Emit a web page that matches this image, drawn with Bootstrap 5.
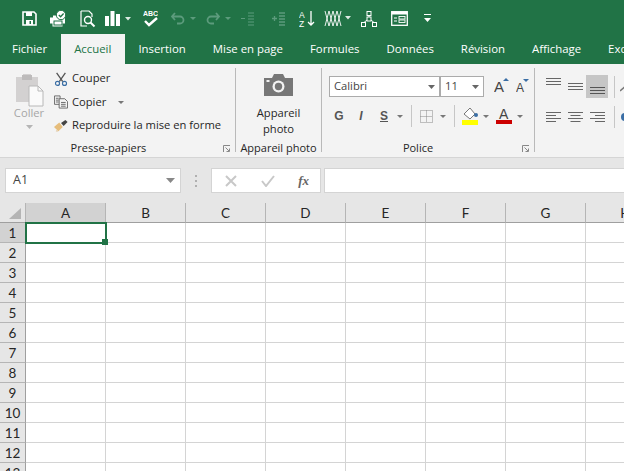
<!DOCTYPE html>
<html lang="fr">
<head>
<meta charset="utf-8">
<title>Excel</title>
<link href="https://cdn.jsdelivr.net/npm/bootstrap@5.3.0/dist/css/bootstrap.min.css" rel="stylesheet">
<style>
html,body{height:471px;overflow:hidden;background:#fff}
body{font-family:"Open Sans","Noto Sans",sans-serif;font-size:11.2px;color:#262626}
.qat{height:34px;background:#217346;display:grid;align-items:center;justify-items:center;padding-left:15px;padding-top:3px;
 grid-template-columns:28px 30px 30px 18px 14px 30px 36px 35px 22px 40px 18px 43px 20px 40px 16px}
.tabbar{height:30px;background:#217346;flex-wrap:nowrap;overflow:hidden;padding-left:0}
.tabitem{color:#fff;font-size:11.4px;padding:6px 13.5px 0;height:30px;white-space:nowrap;line-height:17px}
.tabitem:hover{color:#fff}
.tabfirst{padding-left:12px}
.tabon,.tabon:hover{background:#f3f3f3;color:#217346;padding:6px 13.5px 0;margin-left:0}
.ribbon{height:93px;background:#f3f3f3;border-bottom:1px solid #d5d5d5;box-sizing:content-box;overflow:hidden}
.grp{position:relative;height:84px;margin-top:4px;border-right:1px solid #b9b9b9;flex:none}
.g1{width:236px}.g2{width:86px}.g3{width:213px}.g4{width:89px;border-right:0}
.grplabel{position:absolute;left:0;right:0;bottom:-4px;text-align:center;font-size:11px;line-height:16px;color:#262626}
.lbl1{padding-right:18px}.lbl3{padding-right:20px}
.launch{position:absolute;bottom:-1px;right:4px;line-height:0}
.paste{width:58px;text-align:center;color:#a6a6a6;padding-top:4px}
.paste svg{display:block;margin:0 auto}
.pastetxt{margin-top:-3px;line-height:16px;font-size:11.2px}
.cliprow{height:23.5px;display:flex;align-items:center;gap:4px;white-space:nowrap}
.clipcol{margin-left:-4px;margin-top:-1px}
.icn{width:14px;display:flex;justify-content:center;flex:none}
.camwrap{text-align:center;padding-top:6px;line-height:16px}
.camwrap svg{display:block;margin:0 auto 9px}
.combo{height:21px;background:#fff;border:1px solid #ababab;display:flex;align-items:center;justify-content:space-between;padding:0 4px;font-size:11.2px;color:#444}
.cfont{width:111px}.csize{width:44px}
.frow{padding:8px 0 0 7px;align-items:center}
.frow2{display:grid;grid-template-columns:20px 24px 22px 10px 12px 18px 16px 6px 37px 31px;align-items:center;justify-items:center;padding:8px 0 0 7px;height:30px;font-size:12px;color:#555}
.frow2 b{font-family:"Liberation Sans",sans-serif}
.vsep{width:1px;height:22px;background:#c6c6c6;display:block}
.sz{display:grid;grid-template-columns:3px 21px 21px;align-items:center;justify-items:center;margin-left:4px}
.algrid{display:grid;grid-template-columns:22px 22px 22px 6px 1px 20px;grid-template-rows:23px 7px 23px;justify-items:center;align-items:center;padding:7px 0 0 7px}
.alcell{width:22px;height:23px;display:flex;justify-content:center;padding:3px 0}
.selbg{background:#c6c6c6}
.fbar{height:45px;background:#e6e6e6;padding:10px 0 0 5px;display:flex;align-items:flex-start}
.fbox{height:25px;background:#fff;border:1px solid #d4d4d4;display:flex;align-items:center}
.namebox{width:176px;justify-content:space-between;padding:0 5px 0 7px;font-size:12.5px;color:#444}
.fxbox{width:110px;justify-content:space-between;padding:0 11px 0 13px;color:#666}
.fxtxt{font-family:"Liberation Serif",serif;font-style:italic;font-weight:700;font-size:13px}
.finput{flex:1;margin-left:3px;border-right:0}
.dots{width:30px;display:flex;flex-direction:column;align-items:center;justify-content:center;height:25px;gap:3px}
.dots i{width:2px;height:2px;background:#b0b0b0;display:block}
.sheetwrap{height:268px;overflow:hidden;background:#fff}
table.gridt{table-layout:fixed;width:666px;border-collapse:separate;border-spacing:0;font-family:Lato,"Liberation Sans",sans-serif;font-size:13.500px;color:#262626;margin:0}
.gridt th,.gridt td{height:20px;padding:0;border:0;border-right:1px solid #d4d4d4;border-bottom:1px solid #d4d4d4;background:#fff;line-height:18px;text-align:center;font-weight:400;box-shadow:none}
.gridt thead th{background:#e6e6e6;border-right-color:#b5b5b5;border-bottom-color:#9f9f9f}
.gridt tbody th{background:#e6e6e6;border-right-color:#9f9f9f;border-bottom-color:#b5b5b5}
.gridt .hdon{background:#d2d2d2}
.gridt .corner{position:relative;background:#e6e6e6}
.gridt .corner svg{position:absolute;left:9px;top:5px}
.colrh{width:26px}.colc{width:80px}
.gridt .a1{position:relative}
.cellsel{position:absolute;left:-1px;top:-1px;width:82px;height:22px;border:2px solid #217346}
.cellhandle{position:absolute;right:-3px;bottom:-3px;width:6px;height:6px;background:#217346}
</style>
</head>
<body>
<div class="qat">
 <svg width="15" height="15" viewBox="0 0 15 15"><path d="M1 1h11l2 2v11H1z" fill="none" stroke="#fff" stroke-width="1.6"/><rect x="4" y="1" width="6" height="4" fill="#fff"/><rect x="4" y="9" width="7" height="5" fill="#fff"/><rect x="7.5" y="10" width="1.5" height="3" fill="#217346"/></svg>
 <svg width="18" height="17" viewBox="0 0 18 17"><path d="M1 6.500h3v-2h9v2h3v6h-2.500v3h-10v-3H1z" fill="#fff" transform="translate(0 1)"/><circle cx="12" cy="5" r="4.700" fill="#fff" stroke="#217346"/><path d="M9.800 5l1.800 1.800 3-3.300" fill="none" stroke="#217346" stroke-width="1.300"/><rect x="5" y="11" width="8" height="4" fill="none" stroke="#217346"/></svg>
 <svg width="16" height="18" viewBox="0 0 16 18"><path d="M1 1h8l3 3v3M1 1v15h6" fill="none" stroke="#fff" stroke-width="1.200"/><circle cx="8" cy="10" r="3.500" fill="none" stroke="#fff" stroke-width="1.400"/><path d="M10.500 12.500l4 4" stroke="#fff" stroke-width="2"/></svg>
 <svg width="15" height="15" viewBox="0 0 15 15"><rect x="0" y="5" width="4" height="10" fill="#fff"/><rect x="5.500" y="0" width="4" height="15" fill="#fff"/><rect x="11" y="3" width="4" height="12" fill="#fff"/></svg>
 <svg width="6" height="4" viewBox="0 0 6 4"><path d="M0 0h6L3 3.500z" fill="#dcebe3"/></svg>
 <svg width="15" height="19" viewBox="0 0 15 19"><text x="0" y="6.500" font-family="Liberation Sans,sans-serif" font-weight="700" font-size="7" fill="#fff">ABC</text><path d="M2 12l4 4 8-7" fill="none" stroke="#fff" stroke-width="2.400"/></svg>
 <svg width="25" height="13" viewBox="0 0 25 13"><path d="M4 1L1 4.500 4 8M1.500 4.500H9a3.500 3.500 0 0 1 0 7H6" fill="none" stroke="#5c9b7c" stroke-width="1.800"/><path d="M19 5h6l-3 3z" fill="#5c9b7c"/></svg>
 <svg width="25" height="13" viewBox="0 0 25 13"><path d="M10 1l3 3.500L10 8M12.500 4.500H5a3.500 3.500 0 0 0 0 7h3" fill="none" stroke="#5c9b7c" stroke-width="1.800"/><path d="M19 5h6l-3 3z" fill="#5c9b7c"/></svg>
 <svg width="15" height="14" viewBox="0 0 15 14"><path d="M8 1h6M8 4h6M8 7h6M8 10h6M8 13h6M1 6.500h4" stroke="#5c9b7c" stroke-width="1.100" fill="none"/></svg>
 <svg width="15" height="14" viewBox="0 0 15 14"><path d="M8 1h6M8 4h6M8 7h6M8 10h6M8 13h6M1 6.500h5M3.500 4v5" stroke="#5c9b7c" stroke-width="1.300" fill="none"/></svg>
 <svg width="17" height="18" viewBox="0 0 17 18"><text x="0" y="8" font-family="Liberation Sans,sans-serif" font-size="8.500" fill="#fff">A</text><text x="0" y="16.500" font-family="Liberation Sans,sans-serif" font-size="8.500" fill="#fff">Z</text><path d="M12 1v14M9 12l3 3 3-3" fill="none" stroke="#fff" stroke-width="1.300"/></svg>
 <svg width="27" height="17" viewBox="0 0 27 17"><path d="M1 1l4 15 4-15 4 15 4-15M1 16L5 1l4 15 4-15 4 15" fill="none" stroke="#fff" stroke-width=".9"/><path d="M21 6h6l-3 3.500z" fill="#dcebe3"/></svg>
 <svg width="16" height="16" viewBox="0 0 16 16"><g fill="none" stroke="#fff"><rect x="6" y=".5" width="4" height="4"/><rect x=".5" y="11.500" width="4" height="4"/><rect x="11.500" y="11.500" width="4" height="4"/><rect x="6" y="6" width="4" height="4"/><path d="M8 4.500V6M6 9l-3 2.500M10 9l3 2.500"/></g></svg>
 <svg width="17" height="15" viewBox="0 0 17 15"><rect x=".7" y=".7" width="15.600" height="13.600" fill="none" stroke="#fff" stroke-width="1.300"/><rect x="1" y="1" width="15" height="2.500" fill="#fff"/><path d="M3 7h3M3 10h3" stroke="#fff"/><rect x="8" y="5.500" width="6" height="2.500" fill="none" stroke="#fff" stroke-width=".9"/><rect x="8" y="9" width="6" height="2.500" fill="none" stroke="#fff" stroke-width=".9"/></svg>
 <svg width="7" height="9" viewBox="0 0 7 9"><path d="M0 .5h7" stroke="#fff"/><path d="M0 4h7L3.500 8z" fill="#fff"/></svg>
</div>

<ul class="nav tabbar">
 <li><a class="nav-link tabitem tabfirst" href="#">Fichier</a></li>
 <li><a class="nav-link tabitem tabon" href="#">Accueil</a></li>
 <li><a class="nav-link tabitem" href="#">Insertion</a></li>
 <li><a class="nav-link tabitem" href="#">Mise en page</a></li>
 <li><a class="nav-link tabitem" href="#">Formules</a></li>
 <li><a class="nav-link tabitem" href="#">Données</a></li>
 <li><a class="nav-link tabitem" href="#">Révision</a></li>
 <li><a class="nav-link tabitem" href="#">Affichage</a></li>
 <li><a class="nav-link tabitem" href="#">Excel</a></li>
</ul>

<div class="ribbon d-flex">
 <section class="grp g1 d-flex">
  <div class="paste">
   <svg width="29" height="36" viewBox="0 0 29 36"><path d="M1 5h7V2h8v3h7v25H1z" fill="#d3d1d1"/><rect x="7" y="3" width="10" height="5" fill="#bdbbbb"/><path d="M14 14h9l5 5v15H14z" fill="#fafafa" stroke="#b8b8b8"/><path d="M23 14v5h5" fill="none" stroke="#b8b8b8"/></svg>
   <div class="pastetxt">Coller</div>
   <svg class="mt-1" width="7" height="4" viewBox="0 0 7 4"><path d="M0 0h7L3.500 4z" fill="#b5b5b5"/></svg>
  </div>
  <div class="clipcol">
   <div class="cliprow"><span class="icn"><svg width="16" height="16" viewBox="0 0 16 16"><path d="M3 1l7 10M13 1L6 11" stroke="#555" stroke-width="1.500" fill="none"/><circle cx="4" cy="13" r="2.300" fill="none" stroke="#3a6ea5" stroke-width="1.300"/><circle cx="12" cy="13" r="2.300" fill="none" stroke="#3a6ea5" stroke-width="1.300"/></svg></span>Couper</div>
   <div class="cliprow"><span class="icn"><svg width="15" height="14" viewBox="0 0 15 14"><path d="M.5.500h6v9h-6zM2 3h3M2 5h3M2 7h3" fill="none" stroke="#666"/><path d="M5.500 3.500h6l3 3v7h-9z" fill="#f3f3f3" stroke="#666"/><path d="M7.500 7.500h5M7.500 9.500h5M7.500 11.500h5" stroke="#666"/></svg></span>Copier<svg class="ms-2" width="6" height="3" viewBox="0 0 6 3"><path d="M0 0h6L3 3z" fill="#777"/></svg></div>
   <div class="cliprow"><span class="icn"><svg width="16" height="14" viewBox="0 0 16 14"><path d="M0 8l6-5 4 5-5 5z" fill="#e6bd7b"/><path d="M3 12l-1 1 3 0z" fill="#c99a52"/><path d="M8 3.500L13 0l2.500 2.500L11 7z" fill="#444"/></svg></span>Reproduire la mise en forme</div>
  </div>
  <div class="grplabel lbl1">Presse-papiers</div>
  <span class="launch"><svg width="8" height="8" viewBox="0 0 8 8"><path d="M.5 7V.5H7M2.500 2.500L6 6M3.500 6.500h3v-3" fill="none" stroke="#888"/></svg></span>
 </section>

 <section class="grp g2">
  <div class="camwrap">
   <svg width="29" height="22" viewBox="0 0 29 22"><path d="M0 4h8l2-4h9l2 4h8v18H0z" fill="#777"/><circle cx="14.500" cy="12.500" r="6" fill="#f3f3f3"/><circle cx="14.500" cy="12.500" r="3.700" fill="#777"/><rect x="2.500" y="6" width="3" height="2" fill="#f3f3f3"/></svg>
   Appareil<br>photo
  </div>
  <div class="grplabel">Appareil photo</div>
 </section>

 <section class="grp g3">
  <div class="d-flex frow">
   <div class="combo cfont">Calibri<svg width="7" height="4" viewBox="0 0 7 4"><path d="M0 0h7L3.500 4z" fill="#666"/></svg></div>
   <div class="combo csize">11<svg width="7" height="4" viewBox="0 0 7 4"><path d="M0 0h7L3.500 4z" fill="#666"/></svg></div>
   <div class="sz">
    <span></span>
    <svg width="16" height="20" viewBox="0 0 16 20"><text x="0" y="15" font-family="Liberation Sans,sans-serif" font-size="15" fill="#444">A</text><path d="M9 4l3-3 3 3z" fill="#3a6ea5"/></svg>
    <svg width="14" height="20" viewBox="0 0 14 20"><text x="0" y="15" font-family="Liberation Sans,sans-serif" font-size="12" fill="#444">A</text><path d="M7 2h6l-3 3z" fill="#3a6ea5"/></svg>
   </div>
  </div>
  <div class="frow2">
   <b>G</b><b class="fst-italic">I</b><b class="text-decoration-underline">S</b>
   <svg width="6" height="3" viewBox="0 0 6 3"><path d="M0 0h6L3 3z" fill="#777"/></svg>
   <span class="vsep"></span>
   <svg width="13" height="13" viewBox="0 0 13 13"><path d="M.5.500h12v12H.5zM6.500.5v12M.5 6.500h12" fill="none" stroke="#888" stroke-dasharray="1 1"/></svg>
   <svg width="6" height="3" viewBox="0 0 6 3"><path d="M0 0h6L3 3z" fill="#777"/></svg>
   <span class="vsep"></span>
   <svg width="27" height="18" viewBox="0 0 27 18"><path d="M2 7l6-6 5 6-5 5z" fill="#fff" stroke="#777"/><circle cx="14" cy="8" r="2" fill="#3a6ea5"/><rect x="0" y="13" width="16" height="5" fill="#ff0"/><path d="M21 8h6l-3 3z" fill="#777"/></svg>
   <svg width="27" height="18" viewBox="0 0 27 18"><text x="3" y="12" font-family="Liberation Sans,sans-serif" font-size="14" fill="#444">A</text><rect x="0" y="13" width="16" height="4" fill="#c00"/><path d="M21 8h6l-3 3z" fill="#777"/></svg>
  </div>
  <div class="grplabel lbl3">Police</div>
  <span class="launch"><svg width="8" height="8" viewBox="0 0 8 8"><path d="M.5 7V.5H7M2.500 2.500L6 6M3.500 6.500h3v-3" fill="none" stroke="#888"/></svg></span>
 </section>

 <section class="grp g4">
  <div class="algrid">
   <span class="alcell align-items-start"><svg width="15" height="8" viewBox="0 0 15 8"><path d="M0 .5h15M0 3.500h15M0 6.500h15" stroke="#666"/></svg></span>
   <span class="alcell align-items-center"><svg width="15" height="8" viewBox="0 0 15 8"><path d="M0 .5h15M0 3.500h15M0 6.500h15" stroke="#666"/></svg></span>
   <span class="alcell align-items-end selbg"><svg width="15" height="8" viewBox="0 0 15 8"><path d="M0 .5h15M0 3.500h15M0 6.500h15" stroke="#555"/></svg></span>
   <span></span><span class="vsep"></span>
   <svg width="10" height="10" viewBox="0 0 10 10"><path d="M0 9L9 1" stroke="#777" stroke-width="1.500"/></svg>
   <span></span><span></span><span></span><span></span><span></span><span></span>
   <svg width="15" height="10" viewBox="0 0 15 10"><path d="M0 .5h15M0 3.500h10M0 6.500h15M0 9.500h10" stroke="#666"/></svg>
   <svg width="15" height="10" viewBox="0 0 15 10"><path d="M0 .5h15M2.500 3.500h10M0 6.500h15M2.500 9.500h10" stroke="#666"/></svg>
   <svg width="15" height="10" viewBox="0 0 15 10"><path d="M0 .5h15M5 3.500h10M0 6.500h15M5 9.500h10" stroke="#666"/></svg>
   <span></span><span class="vsep"></span>
   <svg width="10" height="10" viewBox="0 0 10 10"><circle cx="5" cy="5" r="4" fill="#3a6ea5"/></svg>
  </div>
 </section>
</div>

<div class="fbar">
 <div class="fbox namebox">A1<svg width="9" height="5" viewBox="0 0 9 5"><path d="M0 0h9L4.500 5z" fill="#888"/></svg></div>
 <div class="dots"><i></i><i></i><i></i></div>
 <div class="fbox fxbox">
  <svg width="12" height="12" viewBox="0 0 12 12"><path d="M1 1l10 10M11 1L1 11" stroke="#c8c8c8" stroke-width="2"/></svg>
  <svg width="14" height="12" viewBox="0 0 14 12"><path d="M1 6l4 5 8-10" fill="none" stroke="#c8c8c8" stroke-width="2"/></svg>
  <span class="fxtxt">fx</span>
 </div>
 <div class="fbox finput"></div>
</div>

<div class="sheetwrap">
<table class="gridt">
 <colgroup><col class="colrh"><col class="colc"><col class="colc"><col class="colc"><col class="colc"><col class="colc"><col class="colc"><col class="colc"><col class="colc"></colgroup>
 <thead><tr><th class="corner"><svg width="12" height="11" viewBox="0 0 12 11"><path d="M12 0v11H0z" fill="#b4b4b4"/></svg></th><th class="hdon">A</th><th>B</th><th>C</th><th>D</th><th>E</th><th>F</th><th>G</th><th>H</th></tr></thead>
 <tbody>
  <tr><th class="hdon">1</th><td class="a1"><div class="cellsel"><div class="cellhandle"></div></div></td><td></td><td></td><td></td><td></td><td></td><td></td><td></td></tr>
  <tr><th>2</th><td></td><td></td><td></td><td></td><td></td><td></td><td></td><td></td></tr>
  <tr><th>3</th><td></td><td></td><td></td><td></td><td></td><td></td><td></td><td></td></tr>
  <tr><th>4</th><td></td><td></td><td></td><td></td><td></td><td></td><td></td><td></td></tr>
  <tr><th>5</th><td></td><td></td><td></td><td></td><td></td><td></td><td></td><td></td></tr>
  <tr><th>6</th><td></td><td></td><td></td><td></td><td></td><td></td><td></td><td></td></tr>
  <tr><th>7</th><td></td><td></td><td></td><td></td><td></td><td></td><td></td><td></td></tr>
  <tr><th>8</th><td></td><td></td><td></td><td></td><td></td><td></td><td></td><td></td></tr>
  <tr><th>9</th><td></td><td></td><td></td><td></td><td></td><td></td><td></td><td></td></tr>
  <tr><th>10</th><td></td><td></td><td></td><td></td><td></td><td></td><td></td><td></td></tr>
  <tr><th>11</th><td></td><td></td><td></td><td></td><td></td><td></td><td></td><td></td></tr>
  <tr><th>12</th><td></td><td></td><td></td><td></td><td></td><td></td><td></td><td></td></tr>
  <tr><th>13</th><td></td><td></td><td></td><td></td><td></td><td></td><td></td><td></td></tr>
 </tbody>
</table>
</div>
<script src="https://cdn.jsdelivr.net/npm/bootstrap@5.3.0/dist/js/bootstrap.bundle.min.js"></script>
</body>
</html>
